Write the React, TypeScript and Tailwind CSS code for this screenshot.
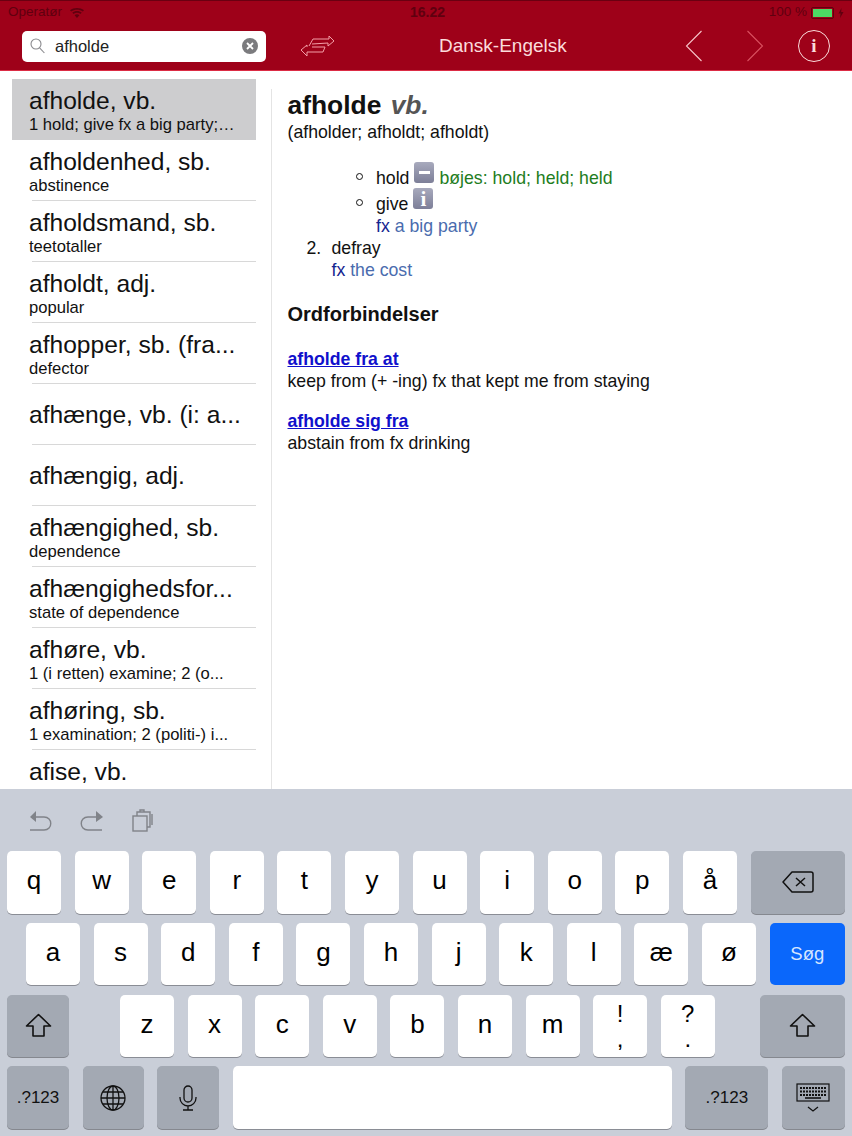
import React from "react";

const FONT = "font-['Liberation_Sans',Arial,sans-serif]";

const entries = [
  { word: "afholde, vb.", sub: "1 hold; give fx a big party;…", selected: true },
  { word: "afholdenhed, sb.", sub: "abstinence" },
  { word: "afholdsmand, sb.", sub: "teetotaller" },
  { word: "afholdt, adj.", sub: "popular" },
  { word: "afhopper, sb. (fra...", sub: "defector" },
  { word: "afhænge, vb. (i: a...", sub: "" },
  { word: "afhængig, adj.", sub: "" },
  { word: "afhængighed, sb.", sub: "dependence" },
  { word: "afhængighedsfor...", sub: "state of dependence" },
  { word: "afhøre, vb.", sub: "1 (i retten) examine; 2 (o..." },
  { word: "afhøring, sb.", sub: "1 examination; 2 (politi-) i..." },
  { word: "afise, vb.", sub: "\u00a0" },
];

const Key = ({ label }: { label: string }) => (
  <div className="w-[54px] h-[62.5px] shrink-0 rounded-[5px] bg-white shadow-[0_1px_0_#8a8d95] flex items-center justify-center text-[26px] text-black pb-[3px]">
    {label}
  </div>
);

const DarkKey = ({ className, children }: { className: string; children: React.ReactNode }) => (
  <div className={`h-[62.5px] shrink-0 rounded-[5px] bg-[#a3a9b3] shadow-[0_1px_0_#85888f] flex items-center justify-center text-[17px] text-[#111] ${className}`}>
    {children}
  </div>
);

const ShiftIcon = () => (
  <svg width="27" height="25" viewBox="0 0 27 25" fill="none" stroke="#111" strokeWidth="1.6" strokeLinejoin="round">
    <path d="M13.5 1.5 L25.5 13 H19 V23 H8 V13 H1.5 Z" />
  </svg>
);

const App = () => {
  return (
    <div className={`${FONT} w-[852px] h-[1136px] flex flex-col overflow-hidden bg-white text-black`}>
      {/* top bar */}
      <div className="h-[71px] shrink-0 bg-[#9e0119] border-t border-[#6a0011] border-b border-b-[#dc2c45] flex flex-col">
        <div className="h-[23px] flex items-center justify-between pl-2 pr-[8px] text-[13.5px] text-[#60000f] relative">
          <div className="flex items-center gap-[8px]">
            <span>Operatør</span>
            <svg width="14" height="10" viewBox="0 0 14 10" fill="#60000f">
              <path d="M7 10 L4.6 7.2 C6 6 8 6 9.4 7.2 Z M3.5 6 L2.3 4.6 C4.8 2.4 9.2 2.4 11.7 4.6 L10.5 6 C8.5 4.3 5.5 4.3 3.5 6 Z M1.2 3.5 L0 2.2 C3.8 -0.7 10.2 -0.7 14 2.2 L12.8 3.5 C9.6 1.1 4.4 1.1 1.2 3.5 Z" />
            </svg>
          </div>
          <span className="absolute left-[410px] font-bold text-[14px]">16.22</span>
          <div className="flex items-center gap-[4px]">
            <span>100 %</span>
            <div className="w-[23px] h-[12px] border border-[#60000f] p-[1px] rounded-[2px] flex">
              <div className="flex-1 bg-[#4cd964]" />
            </div>
            <svg width="6" height="10" viewBox="0 0 6 10" fill="#60000f">
              <path d="M3.5 0 L0.5 5.5 H2.6 L2 10 L5.5 4 H3.2 Z" />
            </svg>
          </div>
        </div>
        <div className="flex-1 flex items-center pl-[22px] pb-[2px]">
          <div className="w-[244px] h-[31px] rounded-[5px] bg-white flex items-center pl-[8px] pr-[8px]">
            <svg width="15" height="16" viewBox="0 0 15 16" fill="none" stroke="#8a8a8e" strokeWidth="1.1">
              <circle cx="6" cy="6" r="5" />
              <path d="M9.6 9.8 L14.4 15" />
            </svg>
            <span className="ml-[10px] flex-1 text-[16.5px] text-[#222]">afholde</span>
            <div className="w-[16px] h-[16px] rounded-full bg-[#7b7b7e] flex items-center justify-center">
              <svg width="8" height="8" viewBox="0 0 8 8" stroke="#fff" strokeWidth="1.8">
                <path d="M1 1 L7 7 M7 1 L1 7" />
              </svg>
            </div>
          </div>
          <svg className="ml-[34px]" width="34" height="22" viewBox="0 0 34 22" fill="none" stroke="#f3a0a8" strokeWidth="1">
            <path d="M9 11 L13 4 H29 V1 L34 6 L28 11 V8 L12 9" />
            <path d="M12 12 H25 L23 17 H7 V21 L1 15 L7 10 V12" />
          </svg>
          <span className="ml-[105px] w-[127px] text-[19px] text-[#fbdcdc] whitespace-nowrap">Dansk-Engelsk</span>
          <svg className="ml-[119px]" width="18" height="32" viewBox="0 0 18 32" fill="none" stroke="#f6c4c8" strokeWidth="1.1">
            <path d="M16.5 1 L1.5 16 L16.5 31" />
          </svg>
          <svg className="ml-[43px]" width="18" height="32" viewBox="0 0 18 32" fill="none" stroke="#d9505f" strokeWidth="1.1">
            <path d="M1.5 1 L16.5 16 L1.5 31" />
          </svg>
          <div className="ml-[34px] w-[32px] h-[32px] rounded-full border border-[#fbdcdc] flex items-center justify-center font-['Liberation_Serif',serif] font-bold text-[19px] text-[#fbdcdc]">
            i
          </div>
        </div>
      </div>

      {/* content */}
      <div className="flex-1 flex min-h-0 overflow-hidden">
        <div className="w-[272px] shrink-0 pt-[8px] pl-[12px] pr-[16px] relative overflow-hidden">
          <div className="absolute right-0 top-[18px] bottom-0 w-px bg-[#e4e4e4]" />
          {entries.map((e) => (
            <div key={e.word} className={`h-[61px] shrink-0 ${e.selected ? "bg-[#cdcdcf]" : ""}`}>
              <div className="h-full ml-[17px] flex flex-col">
                <div className="flex-1 flex flex-col justify-center pt-[2px]">
                  <div className="text-[24.6px] leading-[28px] text-[#111] whitespace-nowrap">{e.word}</div>
                  {e.sub && <div className="text-[16.6px] leading-[19px] text-[#111] whitespace-nowrap">{e.sub}</div>}
                </div>
                {!e.selected && <div className="h-px ml-[3px] bg-[#d8d8d8]" />}
              </div>
            </div>
          ))}
        </div>
        <div className="flex-1 pl-[15.5px] pt-[18px] text-[17.7px] leading-[22px] text-[#111]">
          <div className="text-[26.4px] leading-[32px] font-bold whitespace-nowrap">
            afholde <span className="italic text-[#555] ml-[2px]">vb.</span>
          </div>
          <div>(afholder; afholdt; afholdt)</div>
          <ul className="mt-[20px] ml-[88.5px] list-[circle] pl-0">
            <li className="h-[26px] flex items-end relative">
              <span className="absolute left-[-20px] bottom-[9px] w-[7px] h-[7px] rounded-full border border-[#111]" />
              <span className="leading-[22px]">hold</span>
              <span className="ml-[5px] mb-[6px] w-[20px] h-[21px] rounded-[3px] bg-linear-to-b from-[#a8aabd] to-[#7d7f98] flex items-center justify-center">
                <span className="w-[11px] h-[3px] bg-white" />
              </span>
              <span className="ml-[5px] leading-[22px] text-[#1e7d1e] whitespace-nowrap">bøjes: hold; held; held</span>
            </li>
            <li className="h-[26px] flex items-end relative">
              <span className="absolute left-[-20px] bottom-[9px] w-[7px] h-[7px] rounded-full border border-[#111]" />
              <span className="leading-[22px]">give</span>
              <span className="ml-[5px] mb-[6px] w-[20px] h-[21px] rounded-[3px] bg-linear-to-b from-[#a8aabd] to-[#7d7f98] flex items-center justify-center font-['Liberation_Serif',serif] font-bold text-[21px] text-white">
                i
              </span>
            </li>
            <li className="list-none">
              <span className="text-[#14248f]">fx</span> <span className="text-[#4a6cae]">a big party</span>
            </li>
          </ul>
          <div className="ml-[19px] flex">
            <span className="w-[25px]">2.</span>
            <div>
              <div>defray</div>
              <div>
                <span className="text-[#14248f]">fx</span> <span className="text-[#4a6cae]">the cost</span>
              </div>
            </div>
          </div>
          <div className="mt-[22px] text-[20px] font-bold">Ordforbindelser</div>
          <div className="mt-[23px] font-bold underline text-[#1010cc]">afholde fra at</div>
          <div>keep from (+ -ing) fx that kept me from staying</div>
          <div className="mt-[18px] font-bold underline text-[#1010cc]">afholde sig fra</div>
          <div>abstain from fx drinking</div>
        </div>
      </div>

      {/* keyboard */}
      <div className="h-[347px] shrink-0 bg-[#c9ced8] flex flex-col pl-[7px] pr-[7px]">
        <div className="h-[62px] flex items-center pl-[21px]">
          <svg width="24" height="22" viewBox="0 0 24 22" fill="none" stroke="#808389" strokeWidth="1.4">
            <path d="M2 21 H16 C25 21 25 8 16 8 H3" />
            <path d="M8 2 L2 8 L8 13 Z" fill="#808389" stroke="none" />
          </svg>
          <svg className="ml-[28px]" width="24" height="22" viewBox="0 0 24 22" fill="none" stroke="#808389" strokeWidth="1.4">
            <path d="M22 21 H8 C-1 21 -1 8 8 8 H21" />
            <path d="M16 2 L23 8 L16 13 Z" fill="#808389" stroke="none" />
          </svg>
          <svg className="ml-[28px]" width="22" height="24" viewBox="0 0 22 24" fill="none" stroke="#808389" strokeWidth="1.4">
            <rect x="1" y="8" width="14" height="15" />
            <path d="M5 8 V4 H18 V19 H15 M8 4 V2 H12 V4 M20 6 V17" />
          </svg>
        </div>
        <div className="flex flex-col gap-[9.3px]">
          <div className="flex gap-[13.6px]">
            {["q", "w", "e", "r", "t", "y", "u", "i", "o", "p", "å"].map((k) => (
              <Key key={k} label={k} />
            ))}
            <DarkKey className="flex-1">
              <svg width="32" height="24" viewBox="0 0 32 24" fill="none" stroke="#111" strokeWidth="1.5" strokeLinejoin="round">
                <path d="M10 2 H29 A2 2 0 0 1 31 4 V20 A2 2 0 0 1 29 22 H10 L1 12 Z" />
                <path d="M14 8 L23 16 M23 8 L14 16" />
              </svg>
            </DarkKey>
          </div>
          <div className="flex gap-[13.6px] pl-[19px]">
            {["a", "s", "d", "f", "g", "h", "j", "k", "l", "æ", "ø"].map((k) => (
              <Key key={k} label={k} />
            ))}
            <div className="flex-1 h-[62.5px] rounded-[5px] bg-[#0a67fb] flex items-center justify-center text-[18.5px] text-[#d6e6ff]">
              Søg
            </div>
          </div>
          <div className="flex gap-[13.6px]">
            <DarkKey className="w-[62px] mr-[37.4px]">
              <ShiftIcon />
            </DarkKey>
            {["z", "x", "c", "v", "b", "n", "m"].map((k) => (
              <Key key={k} label={k} />
            ))}
            <div className="w-[54px] h-[62.5px] shrink-0 rounded-[5px] bg-white shadow-[0_1px_0_#8a8d95] flex flex-col items-center justify-center text-[24px] leading-[25px] text-black">
              <span>!</span>
              <span>,</span>
            </div>
            <div className="w-[54px] h-[62.5px] shrink-0 rounded-[5px] bg-white shadow-[0_1px_0_#8a8d95] flex flex-col items-center justify-center text-[24px] leading-[25px] text-black">
              <span>?</span>
              <span>.</span>
            </div>
            <DarkKey className="flex-1 ml-[32px]">
              <ShiftIcon />
            </DarkKey>
          </div>
          <div className="flex gap-[13.6px]">
            <DarkKey className="w-[62px]">.?123</DarkKey>
            <DarkKey className="w-[61px]">
              <svg width="26" height="26" viewBox="0 0 26 26" fill="none" stroke="#111" strokeWidth="1.3">
                <circle cx="13" cy="13" r="12" />
                <ellipse cx="13" cy="13" rx="6" ry="12" />
                <path d="M13 1 V25 M1 13 H25 M3 7 H23 M3 19 H23" />
              </svg>
            </DarkKey>
            <DarkKey className="w-[62px]">
              <svg width="18" height="26" viewBox="0 0 18 26" fill="none" stroke="#111" strokeWidth="1.3">
                <rect x="5" y="1" width="8" height="16" rx="4" />
                <path d="M1 12 V13 A8 8 0 0 0 17 13 V12 M9 21 V25 M4 25 H14" />
              </svg>
            </DarkKey>
            <div className="w-[439px] h-[62.5px] shrink-0 rounded-[5px] bg-white shadow-[0_1px_0_#8a8d95]" />
            <DarkKey className="w-[83px]">.?123</DarkKey>
            <DarkKey className="flex-1">
              <svg width="34" height="30" viewBox="0 0 34 30" fill="none" stroke="#111" strokeWidth="1.2">
                <rect x="1" y="1" width="32" height="17" />
                <path d="M4 5 H30 M4 8.5 H30 M4 12 H30" strokeWidth="2" strokeDasharray="2 1" />
                <path d="M9 15 H25" strokeWidth="1.6" />
                <path d="M12 24 L17 28 L22 24" strokeWidth="1.3" />
              </svg>
            </DarkKey>
          </div>
        </div>
      </div>
    </div>
  );
};

export default App;
